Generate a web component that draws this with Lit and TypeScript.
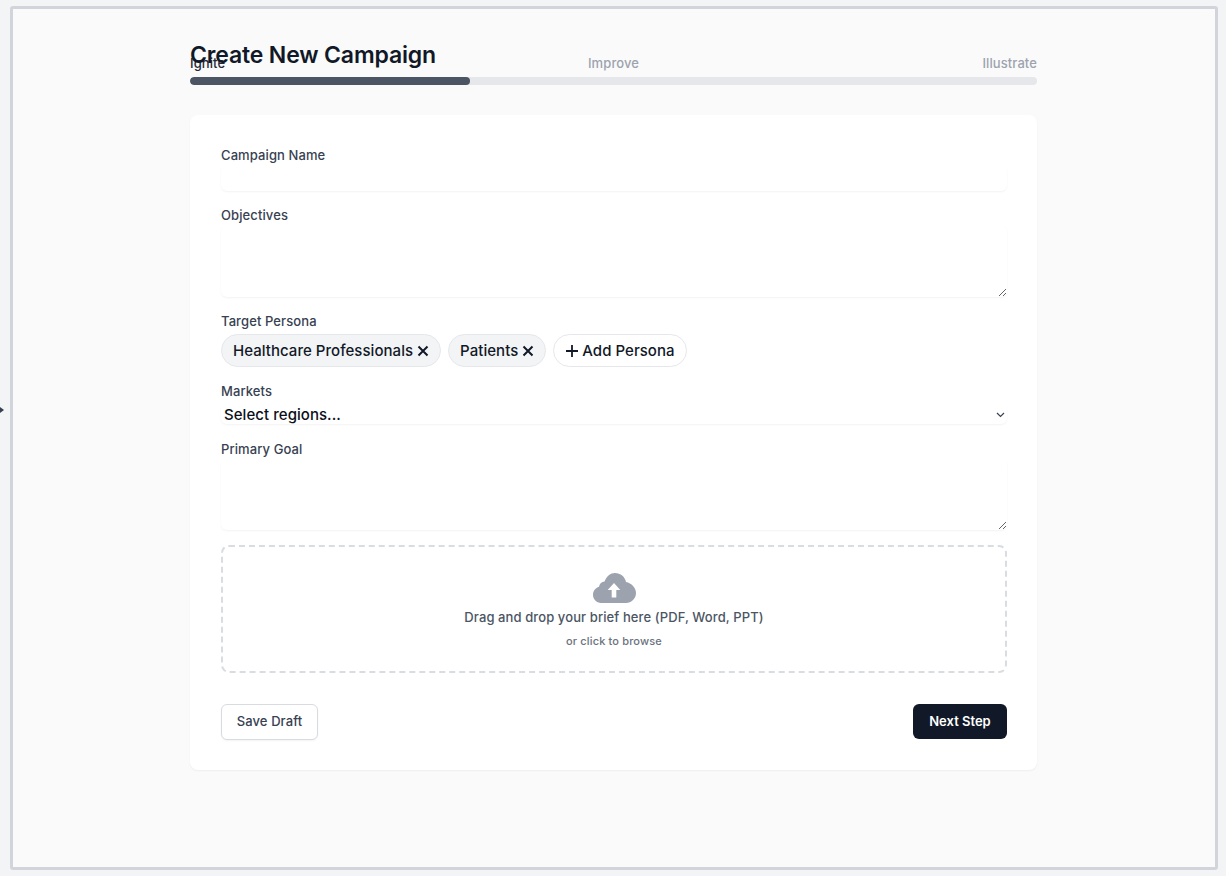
import { LitElement, html, css } from "lit";
import { customElement } from "lit/decorators.js";

@customElement("app-root")
export class AppRoot extends LitElement {
  static styles = css`
    :host { display: block; height: 876px; box-sizing: border-box; padding: 6px 8px 6px 10px; background: #f3f4f6; font-family: Inter, "Liberation Sans", sans-serif; position: relative; overflow: hidden; }
    * { box-sizing: border-box; }
    .pointer { position: absolute; left: 0; top: 407px; width: 0; height: 0; border-left: 4px solid #374151; border-top: 3px solid transparent; border-bottom: 3px solid transparent; }
    .frame { height: 864px; border: 3px solid #d1d5db; border-radius: 3px; background: #fafafa; padding: 30px 178px 0 177px; }
    h1 { margin: 0 0 -18px; font-size: 23px; line-height: 32px; font-weight: 600; letter-spacing: -0.15px; color: #111827; position: relative; }
    .steps { display: grid; grid-template-columns: 1fr auto 1fr; font-size: 13px; line-height: 20px; font-weight: 500; letter-spacing: 0.1px; color: #9ca3af; margin-bottom: 4px; }
    .steps .on { color: #1f2937; }
    .steps .end { text-align: right; }
    .track { height: 8px; border-radius: 4px; background: #e5e7eb; overflow: hidden; margin-bottom: 30px; }
    .fill { height: 100%; border-radius: 4px; background: #4b5563; }
    .card { background: #fff; border-radius: 8px; padding: 30px 30px 30px 31px; box-shadow: 0 1px 2px rgba(0,0,0,.05); height: 655px; }
    label { display: block; font-size: 13px; line-height: 20px; font-weight: 500; letter-spacing: 0.1px; color: #374151; }
    input, textarea { display: block; width: 100%; border: 0; border-radius: 6px; box-shadow: 0 1px 2px rgba(0,0,0,.05); background: #fff; margin-bottom: 14px; outline: none; padding: 0; }
    input { height: 26px; }
    textarea { height: 72px; resize: vertical; }
    textarea.goal { height: 71px; margin-bottom: 15px; }
    .chips { display: flex; gap: 7px; margin: 3px 0 14px; }
    .chip { display: flex; align-items: center; gap: 4px; height: 33px; padding: 0 11px 0 11px; border: 1px solid #e5e7eb; border-radius: 17px; background: #f3f4f6; font-size: 15px; font-weight: 500; letter-spacing: 0.04px; color: #111827; }
    .chip.add { background: #fff; gap: 3px; }
    .chip svg { display: block; }
    .select { position: relative; margin: 3px 0 15px; }
    select { display: block; width: 100%; height: 20px; border: 0; border-radius: 6px; background: #fff; box-shadow: 0 1px 2px rgba(0,0,0,.05); font: 500 15px Inter, "Liberation Sans", sans-serif; letter-spacing: 0.05px; color: #0b0f19; padding: 0 0 0 3px; outline: none; appearance: none; -webkit-appearance: none; }
    .chev { position: absolute; right: 2px; top: 8px; display: block; pointer-events: none; }
    .drop { height: 128px; border: 2px dashed #d9dce1; border-radius: 8px; display: flex; flex-direction: column; align-items: center; padding-top: 26px; }
    .drop svg { display: block; margin-bottom: 4px; }
    .drop .main { font-size: 13px; line-height: 20px; font-weight: 500; letter-spacing: 0.1px; color: #4b5563; }
    .drop .sub { font-size: 11px; line-height: 16px; font-weight: 500; letter-spacing: 0.15px; color: #6b7280; margin-top: 6px; }
    .actions { display: flex; justify-content: space-between; align-items: flex-start; margin-top: 31px; }
    button { font: 500 13px/20px Inter, "Liberation Sans", sans-serif; border-radius: 6px; padding: 0 0 1px; cursor: pointer; white-space: nowrap; }
    .save { height: 36px; width: 97px; background: #fff; border: 1px solid #d8dbe0; color: #374151; letter-spacing: 0.1px; box-shadow: 0 1px 2px rgba(0,0,0,.05); padding-bottom: 2px; }
    .next { height: 35px; width: 94px; background: #111827; border: 0; color: #fff; font-weight: 600; }
  `;

  render() {
    const x = html`<svg width="12" height="12" viewBox="0 0 12 12"><path d="M1.500 1.500l9 9M10.500 1.500l-9 9" stroke="#111827" stroke-width="2" fill="none"/></svg>`;
    return html`
      <div class="pointer"></div>
      <div class="frame">
        <h1>Create New Campaign</h1>
        <div class="steps"><span class="on">Ignite</span><span>Improve</span><span class="end">Illustrate</span></div>
        <div class="track"><div class="fill" style="width:33%"></div></div>
        <div class="card">
          <label>Campaign Name</label>
          <input type="text" />
          <label>Objectives</label>
          <textarea></textarea>
          <label>Target Persona</label>
          <div class="chips">
            <span class="chip">Healthcare Professionals ${x}</span>
            <span class="chip">Patients ${x}</span>
            <span class="chip add"><svg width="14" height="14" viewBox="0 0 14 14"><path d="M7 1v12M1 7h12" stroke="#111827" stroke-width="1.800" fill="none"/></svg>Add Persona</span>
          </div>
          <label>Markets</label>
          <div class="select">
            <select><option>Select regions...</option></select>
            <svg class="chev" width="9" height="6" viewBox="0 0 9 6"><path d="M1 1l3.500 3.500L8 1" stroke="#374151" stroke-width="1.200" fill="none"/></svg>
          </div>
          <label>Primary Goal</label>
          <textarea class="goal"></textarea>
          <div class="drop">
            <svg width="43" height="30" viewBox="0 0 43 30"><path fill="#9ca3af" d="M8 30C3.500 30 0 26.300 0 21.800c0-3.800 2.500-7 6-8 .5-3 2.700-5.100 5.500-5.300C13.500 3.400 17.500 0 22 0c5.500 0 10 3.800 11 9 5.500 1 10 5.800 10 11 0 5.500-4.500 10-10 10z"/><path fill="#fff" d="M21 10l6.300 7h-4v7.500h-4.600V17h-4z"/></svg>
            <div class="main">Drag and drop your brief here (PDF, Word, PPT)</div>
            <div class="sub">or click to browse</div>
          </div>
          <div class="actions">
            <button class="save">Save Draft</button>
            <button class="next">Next Step</button>
          </div>
        </div>
      </div>
    `;
  }
}
